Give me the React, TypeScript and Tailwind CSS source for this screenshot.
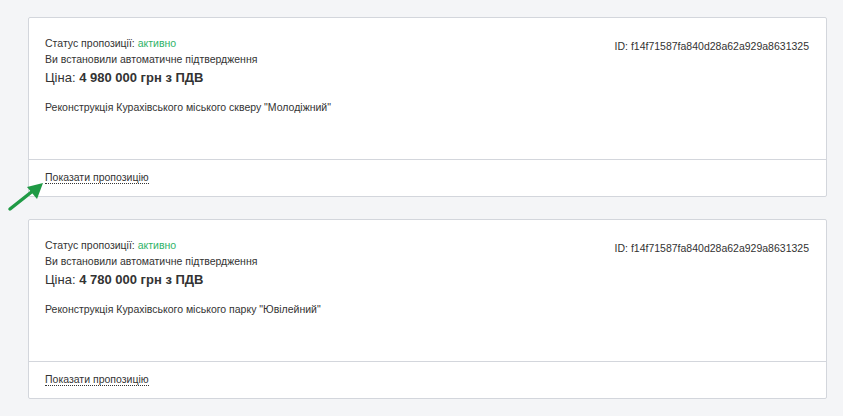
import React from "react";

type Offer = { price: string; title: string };

const offers: Offer[] = [
  { price: "4 980 000 грн з ПДВ", title: 'Реконструкція Курахівського міського скверу "Молодіжний"' },
  { price: "4 780 000 грн з ПДВ", title: 'Реконструкція Курахівського міського парку "Ювілейний"' },
];

function Card({ offer }: { offer: Offer }) {
  return (
    <div className="w-[799px] bg-white border border-[#d3d6dc] rounded-[2px]">
      <div className="h-[142px] px-[16px] pt-[17px] flex justify-between border-b border-[#d3d6dc]">
        <div>
          <div className="text-[10.5px] leading-[16px] text-[#333]">
            Статус пропозиції: <span className="text-[#2fb369]">активно</span>
          </div>
          <div className="text-[10.5px] leading-[16px] text-[#333]">Ви встановили автоматичне підтвердження</div>
          <div className="mt-px text-[13px] leading-[20px] text-[#333]">
            Ціна: <span className="font-bold">{offer.price}</span>
          </div>
          <div className="mt-[11px] text-[10.5px] leading-[16px] text-[#333]">{offer.title}</div>
        </div>
        <div className="pt-[3px] pr-px text-[10.5px] leading-[16px] text-[#333]">ID: f14f71587fa840d28a62a929a8631325</div>
      </div>
      <div className="h-[36px] px-[16px] pt-[4px]">
        <span className="text-[10.5px] leading-[16px] text-[#333] border-b border-dotted border-[#333]">Показати пропозицію</span>
      </div>
    </div>
  );
}

export default function App() {
  return (
    <div
      className="relative w-[843px] h-[416px] bg-[#f4f5f7] pl-[28px] pt-[17px] flex flex-col gap-[22px]"
      style={{ fontFamily: '"Liberation Sans", Arial, sans-serif' }}
    >
      {offers.map((o, i) => (
        <Card key={i} offer={o} />
      ))}
      <svg className="absolute left-[6px] top-[178px]" width="40" height="36" viewBox="0 0 40 36">
        <line x1="4" y1="31" x2="28" y2="12" stroke="#1f9a45" strokeWidth="3.5" strokeLinecap="round" />
        <polygon points="37,5 21,9 31,21" fill="#1f9a45" />
      </svg>
    </div>
  );
}
